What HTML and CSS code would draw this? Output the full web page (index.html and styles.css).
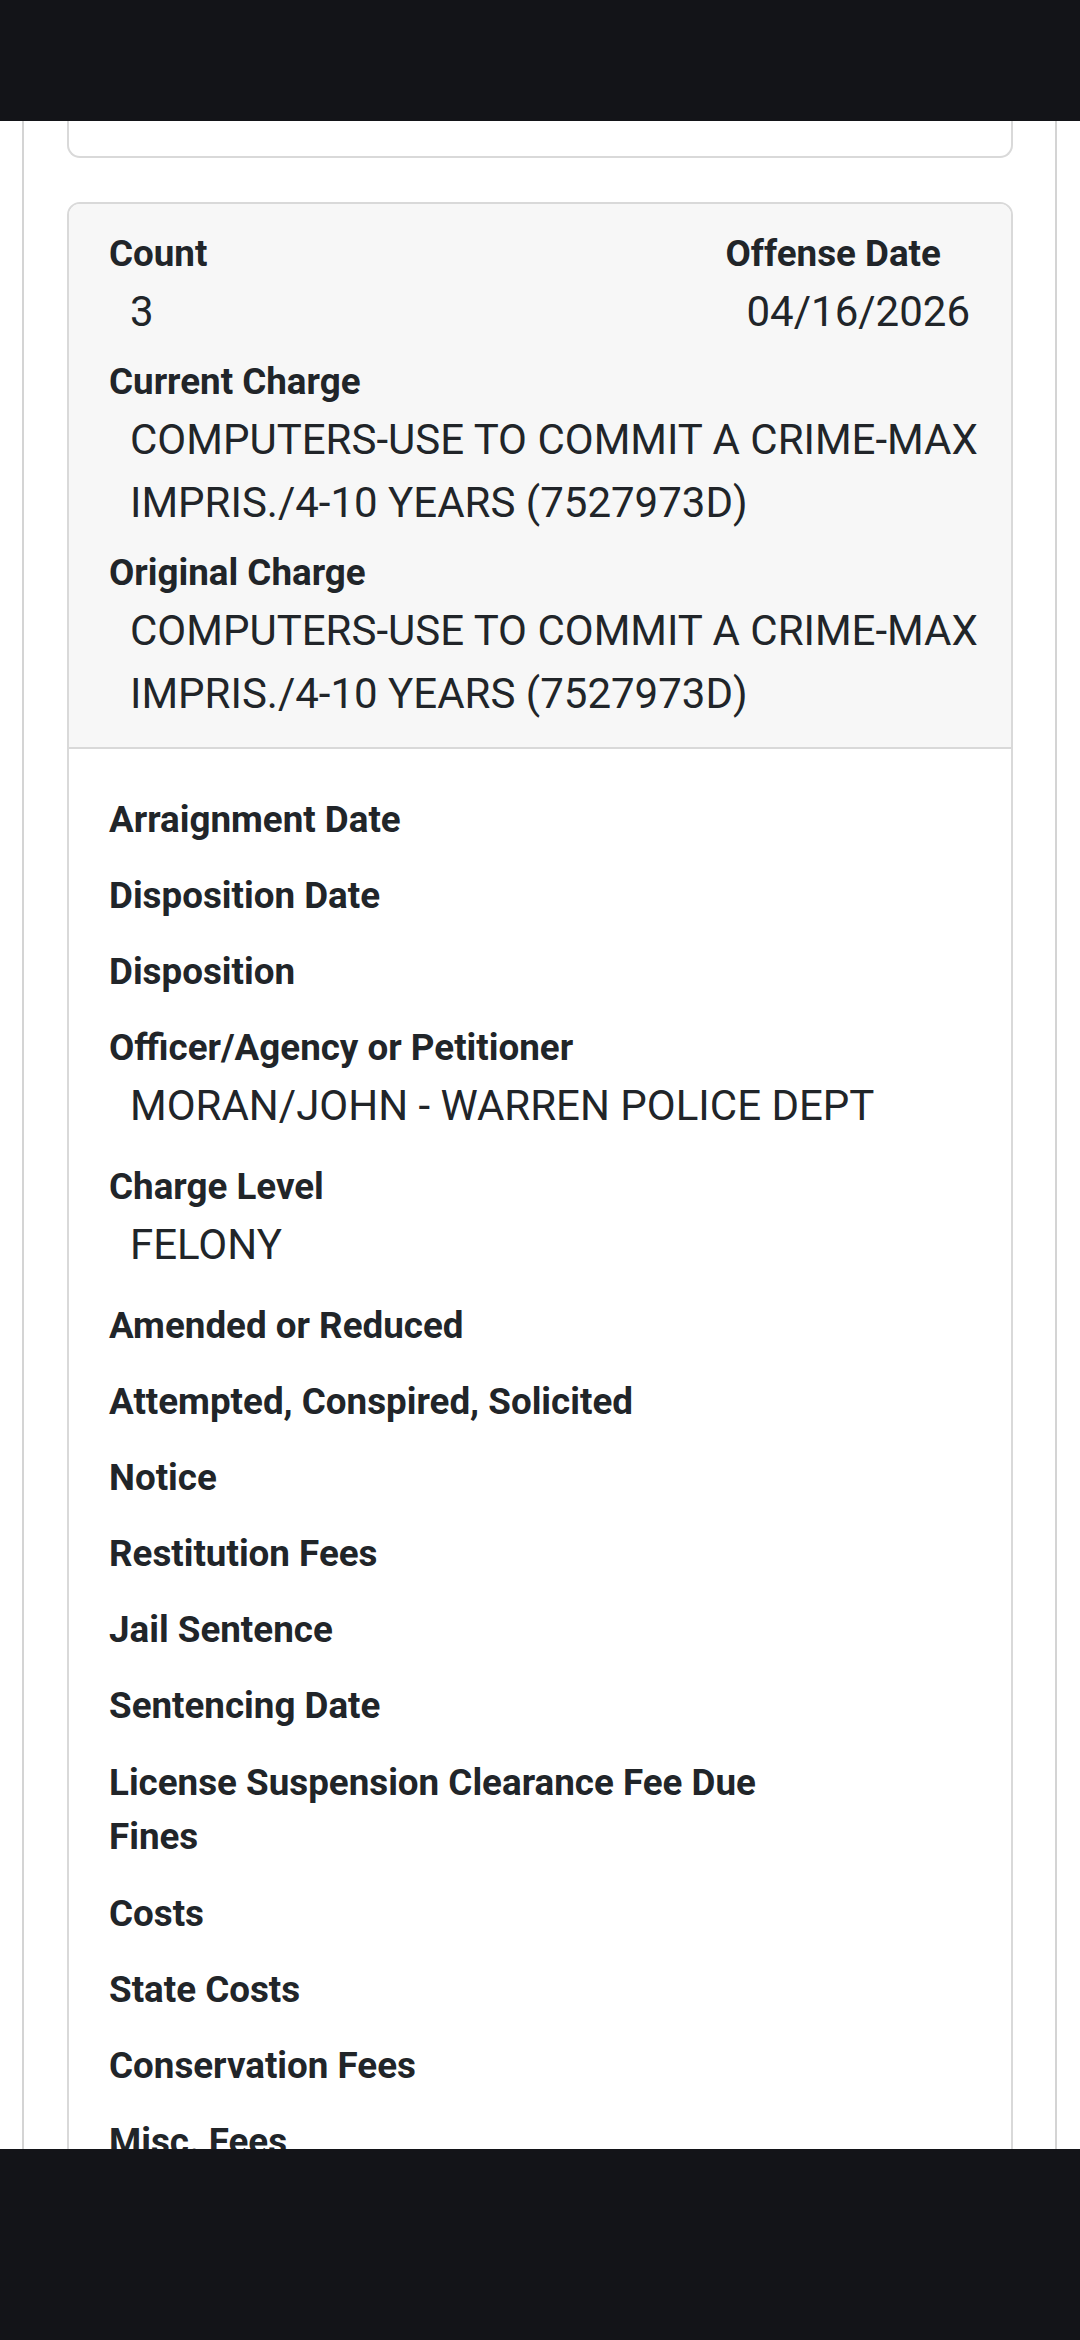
FILE: index.html
```html
<!DOCTYPE html>
<html lang="en">
<head>
<meta charset="utf-8">
<title>Charge Details</title>
<link rel="stylesheet" href="styles.css">
</head>
<body>
<div class="topbar"></div>
<main class="viewport">
  <div class="container">
    <div class="card card-prev"></div>
    <section class="card charge">
      <header class="card-header">
        <div class="row-split">
          <div class="field">
            <div class="label">Count</div>
            <div class="value">3</div>
          </div>
          <div class="field">
            <div class="label">Offense Date</div>
            <div class="value">04/16/2026</div>
          </div>
        </div>
        <div class="field">
          <div class="label">Current Charge</div>
          <div class="value">COMPUTERS-USE TO COMMIT A CRIME-MAX IMPRIS./4-10 YEARS (7527973D)</div>
        </div>
        <div class="field">
          <div class="label">Original Charge</div>
          <div class="value">COMPUTERS-USE TO COMMIT A CRIME-MAX IMPRIS./4-10 YEARS (7527973D)</div>
        </div>
      </header>
      <div class="card-body">
        <div class="item"><div class="label">Arraignment Date</div></div>
        <div class="item"><div class="label">Disposition Date</div></div>
        <div class="item"><div class="label">Disposition</div></div>
        <div class="item">
          <div class="label">Officer/Agency or Petitioner</div>
          <div class="value">MORAN/JOHN - WARREN POLICE DEPT</div>
        </div>
        <div class="item">
          <div class="label">Charge Level</div>
          <div class="value">FELONY</div>
        </div>
        <div class="item"><div class="label">Amended or Reduced</div></div>
        <div class="item"><div class="label">Attempted, Conspired, Solicited</div></div>
        <div class="item"><div class="label">Notice</div></div>
        <div class="item"><div class="label">Restitution Fees</div></div>
        <div class="item"><div class="label">Jail Sentence</div></div>
        <div class="item"><div class="label">Sentencing Date</div></div>
        <div class="item item-tight"><div class="label">License Suspension Clearance Fee Due</div><div class="label">Fines</div></div>
        <div class="item"><div class="label">Costs</div></div>
        <div class="item"><div class="label">State Costs</div></div>
        <div class="item"><div class="label">Conservation Fees</div></div>
        <div class="item"><div class="label">Misc. Fees</div></div>
      </div>
    </section>
  </div>
</main>
<div class="bottombar"></div>
</body>
</html>
```

FILE: styles.css
```css
html, body {
  margin: 0;
  padding: 0;
  background: #ffffff;
}

body {
  font-family: Roboto, "Liberation Sans", Arial, sans-serif;
  color: #212529;
  width: 1080px;
  height: 2340px;
  overflow: hidden;
}

.topbar {
  height: 121px;
  background: #131418;
}

.bottombar {
  height: 191px;
  background: #131418;
}

.viewport {
  height: 2028px;
  overflow: hidden;
}

.container {
  margin: 0 23px 0 22px;
  border-left: 2px solid #d4d4d4;
  border-right: 2px solid #d4d4d4;
  padding: 0 42px 0 43px;
  min-height: 2028px;
}

.card {
  border: 2px solid #d9d9d9;
  border-radius: 13px;
  background: #ffffff;
}

.card-prev {
  height: 35px;
  border-top: none;
  border-top-left-radius: 0;
  border-top-right-radius: 0;
  margin-bottom: 44px;
}

.charge {
  overflow: hidden;
}

.card-header {
  background: #f7f7f7;
  border-bottom: 2px solid #d9d9d9;
  padding: 24px 10px 9px 40px;
}

.row-split {
  display: flex;
  justify-content: space-between;
  margin-right: 31px;
}

.field {
  margin-bottom: 13px;
}

.label {
  font-size: 36.75px;
  font-weight: 700;
  line-height: 52px;
}

.value {
  font-size: 42px;
  font-weight: 400;
  line-height: 63px;
  padding-left: 21px;
}

.card-body {
  padding: 45px 40px 0 40px;
}

.item {
  margin-bottom: 24px;
}

.item-tight {
  margin-top: 4px;
}

.item-tight .label {
  line-height: 54px;
}
```
